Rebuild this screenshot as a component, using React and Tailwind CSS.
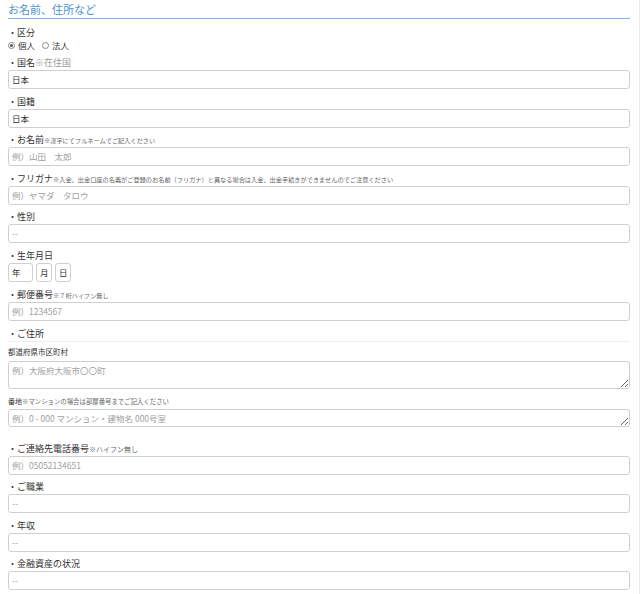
const jp = "font-['Noto_Sans_CJK_JP','Noto_Sans',sans-serif]";

function Label({ children, note }) {
  return (
    <div className="h-[14px] leading-[14px] text-[9px] text-[#333] whitespace-nowrap">
      ・{children}
      {note && <span className="text-[6.2px] text-[#666]">{note}</span>}
    </div>
  );
}

function TextBox({ value, placeholder }) {
  return (
    <div className="h-[19px] rounded-[3px] border border-[#cfcfcf] bg-white px-[3px] flex items-center text-[8.5px] leading-none">
      {value ? (
        <span className="text-[#333]">{value}</span>
      ) : (
        <span className="text-[#a0a0a0]">{placeholder}</span>
      )}
    </div>
  );
}

function Field({ label, note, value, placeholder }) {
  return (
    <div className="mb-[5.5px]">
      <Label note={note}>{label}</Label>
      <TextBox value={value} placeholder={placeholder} />
    </div>
  );
}

function Radio({ checked, label }) {
  return (
    <span className="inline-flex items-center gap-[3px]">
      <span className="w-[7px] h-[7px] rounded-full border border-[#8a8a8a] bg-white flex items-center justify-center">
        {checked && <span className="w-[3px] h-[3px] rounded-full bg-[#555]" />}
      </span>
      <span>{label}</span>
    </span>
  );
}

function Area({ placeholder, height }) {
  return (
    <textarea
      readOnly
      placeholder={placeholder}
      className={`block w-full rounded-[3px] border border-[#cfcfcf] px-[3px] py-[3px] text-[8.5px] leading-[11px] text-[#333] placeholder:text-[#a0a0a0] outline-none ${height}`}
    />
  );
}

export default function App() {
  return (
    <div className={`w-[640px] min-h-[594px] bg-white border-r border-[#ececec] ${jp}`}>
      <div className="pl-2 pr-[9px] pt-[2px]">
        <div className="text-[11px] leading-[15px] text-[#4d93cc] pb-[1px] border-b border-[#86b3dc]">
          お名前、住所など
        </div>

        <div className="mt-[7px] mb-[5px]">
          <Label>区分</Label>
          <div className="flex items-center gap-[7px] text-[8.5px] text-[#333] h-[11px] leading-none">
            <Radio checked label="個人" />
            <Radio label="法人" />
          </div>
        </div>

        <Field label="国名" note={<span className="text-[9px] text-[#999]">※在住国</span>} value="日本" />
        <Field label="国籍" value="日本" />
        <Field label="お名前" note="※漢字にてフルネームでご記入ください" placeholder="例）山田　太郎" />
        <Field
          label="フリガナ"
          note="※入金、出金口座の名義がご登録のお名前（フリガナ）と異なる場合は入金、出金手続きができませんのでご注意ください"
          placeholder="例）ヤマダ　タロウ"
        />
        <Field label="性別" placeholder="--" />

        <div className="mb-[6.5px]">
          <Label>生年月日</Label>
          <div className="flex gap-[3px] text-[8.5px] text-[#333]">
            <div className="w-[25px] h-[19px] rounded-[3px] border border-[#cfcfcf] flex items-center px-[3px]">年</div>
            <div className="w-[16px] h-[19px] rounded-[3px] border border-[#cfcfcf] flex items-center px-[3px]">月</div>
            <div className="w-[16px] h-[19px] rounded-[3px] border border-[#cfcfcf] flex items-center px-[3px]">日</div>
          </div>
        </div>

        <Field label="郵便番号" note="※７桁ハイフン無し" placeholder="例）1234567" />

        <div className="border-b border-[#eeeeee]">
          <Label>ご住所</Label>
        </div>
        <div className="mt-[3px] text-[7.5px] leading-[14px] text-[#333]">都道府県市区町村</div>
        <div className="mt-[2px]">
          <Area placeholder="例）大阪府大阪市〇〇町" height="h-[28px]" />
        </div>
        <div className="mt-[5px] text-[7px] leading-[14px] text-[#333] whitespace-nowrap">
          番地<span className="text-[6.4px] text-[#666]">※マンションの場合は部屋番号までご記入ください</span>
        </div>
        <div className="mb-[15px]">
          <Area placeholder="例）0 - 000 マンション・建物名 000号室" height="h-[18px]" />
        </div>

        <Field label="ご連絡先電話番号" note={<span className="text-[7px]">※ハイフン無し</span>} placeholder="例）05052134651" />
        <Field label="ご職業" placeholder="--" />
        <Field label="年収" placeholder="--" />
        <Field label="金融資産の状況" placeholder="--" />
      </div>
    </div>
  );
}
